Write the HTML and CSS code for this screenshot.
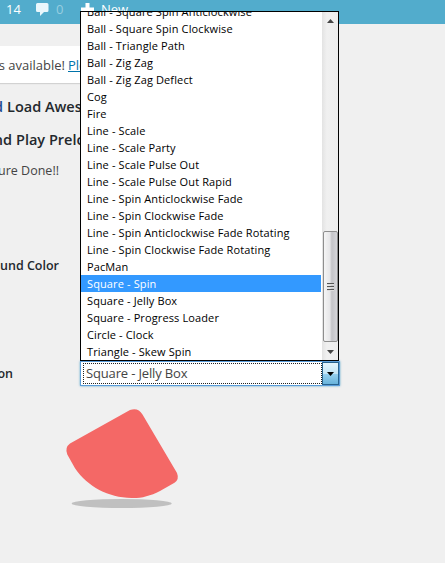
FILE: index.html
```
<!DOCTYPE html>
<html lang="en">
<head>
<meta charset="utf-8">
<title>Preloader settings</title>
<link rel="stylesheet" href="styles.css">
</head>
<body>
<header class="bar">
  <span class="count">14</span>
  <svg class="bubble" width="13" height="13" viewBox="0 0 13 13"><path d="M1.500 0H11Q12.500 0 12.500 1.500V7.500Q12.500 9 11 9H8L4 13V9H1.500Q0 9 0 7.500V1.500Q0 0 1.500 0Z"/></svg>
  <span class="zero">0</span>
  <svg class="plus" width="13" height="13" viewBox="0 0 13 13"><path d="M4.500 0H8.500V4.500H13V8.500H8.500V13H4.500V8.500H0V4.500H4.500Z"/></svg>
  <span class="new">New</span>
</header>
<main>
  <div class="notice"><span class="lead notice-lead">is available!</span><a>Please</a></div>
  <h2 class="line first"><span class="lead w3"><i>d</i></span><span>Load Awesome</span></h2>
  <h2 class="line second"><span class="lead w11">nd</span><span>Play Preloader</span></h2>
  <p class="done"><span class="lead w59">oure Done!!</span></p>
  <div class="label color"><span class="lead w59">und Color</span></div>
  <div class="field">
    <span class="label"><span class="lead w13">on</span></span>
    <div class="select"><div class="value"><span>Square - Jelly Box</span></div><div class="arrow"><svg width="7" height="4" viewBox="0 0 7 4"><path d="M0 0H7L3.500 4Z"/></svg></div></div>
    <div class="popup">
      <ul class="options">
        <li>Ball - Square Spin Anticlockwise</li>
        <li>Ball - Square Spin Clockwise</li>
        <li>Ball - Triangle Path</li>
        <li>Ball - Zig Zag</li>
        <li>Ball - Zig Zag Deflect</li>
        <li>Cog</li>
        <li>Fire</li>
        <li>Line - Scale</li>
        <li>Line - Scale Party</li>
        <li>Line - Scale Pulse Out</li>
        <li>Line - Scale Pulse Out Rapid</li>
        <li>Line - Spin Anticlockwise Fade</li>
        <li>Line - Spin Clockwise Fade</li>
        <li>Line - Spin Anticlockwise Fade Rotating</li>
        <li>Line - Spin Clockwise Fade Rotating</li>
        <li>PacMan</li>
        <li class="active">Square - Spin</li>
        <li>Square - Jelly Box</li>
        <li>Square - Progress Loader</li>
        <li>Circle - Clock</li>
        <li>Triangle - Skew Spin</li>
      </ul>
      <div class="scroll">
        <svg class="up" width="7" height="4" viewBox="0 0 7 4"><path d="M0 4H7L3.500 0Z"/></svg>
        <div class="thumb"><b></b><b></b><b></b></div>
        <svg class="down" width="7" height="4" viewBox="0 0 7 4"><path d="M0 0H7L3.500 4Z"/></svg>
      </div>
    </div>
  </div>
  <svg class="jelly" width="120" height="104" viewBox="62 406 120 104">
    <ellipse cx="121.700" cy="503.500" rx="50" ry="4.500" fill="#c0c0c0"/>
    <path fill="#f46866" d="M70 443.500L130 410Q138 407 142.500 414.500L177 473Q179.500 479.500 174.500 482.800L160 490.900C150 496 141 498.300 131.500 498C108 497.500 88 487 75 468.300L67.300 454.500Q64.500 447.500 70 443.500Z"/>
  </svg>
</main>
</body>
</html>
```
FILE: styles.css
```
* { box-sizing: border-box; }
body { margin: 0; width: 445px; height: 563px; overflow: hidden; background: #f0f0f0; color: #444; font: 13px/18px "Open Sans", sans-serif; }
.bar { height: 24px; background: #52accc; color: #fff; display: flex; align-items: flex-start; padding: 0 0 0 6px; }
.bar svg { fill: #e9f7fc; margin-top: 3px; }
.count { width: 30px; }
.zero { color: #97cee0; margin-left: 7px; width: 17px; }
.bar .plus { margin-left: 8px; fill: #fff; margin-right: 7px; }
.bubble { width: 13px; }
.lead { display: flex; justify-content: flex-end; flex: none; white-space: nowrap; }
.notice { margin-top: 22px; height: 37px; background: #fff; box-shadow: 0 1px 1px rgba(0,0,0,.12); display: flex; align-items: center; width: 338px; }
.notice-lead { width: 65px; margin-right: 3px; }
.notice a { color: #0073aa; text-decoration: underline; }
.line { display: flex; gap: 4px; margin: 0; color: #23282d; font-size: 14.500px; line-height: 20px; font-weight: 600; white-space: nowrap; }
.first { margin-top: 14px; }
.second { margin-top: 13px; }
.line i { font-style: normal; color: #224b92; }
.w3 { width: 3px; }
.w11 { width: 12px; }
.w59 { width: 59px; }
.w13 { width: 13px; }
.done { margin: 12px 0 0; font-size: 12.500px; }
.label { color: #23282d; font-weight: 600; font-size: 12.500px; }
.color { margin-top: 77px; }
.field { position: relative; margin-top: 86px; height: 25px; display: flex; align-items: center; }
.field > .label { width: 80px; }
.select { width: 260px; height: 25px; border: 1px solid #5b9dd9; box-shadow: 0 0 2px rgba(30,140,190,.7); background: #fff; display: flex; padding: 0; }
.value { width: 239px; height: 21px; margin: 1px 0 0 2px; border: 1px dotted #222; padding-left: 2px; line-height: 19px; letter-spacing: -.15px; white-space: nowrap; }
.arrow { width: 17px; height: 23px; border: 1px solid #28628d; background: linear-gradient(#e3f4fc, #c4e5f6 50%, #98d1ef 51%, #68b3db); display: flex; align-items: center; justify-content: center; }
.arrow svg { flex: none; }
.popup { position: absolute; left: 80px; top: -350px; width: 259px; height: 350px; border: 1px solid #000; background: #fff; display: flex; overflow: hidden; }
.options { list-style: none; margin: -9px 0 0; padding: 0; width: 240px; color: #000; font-size: 11px; line-height: 17px; letter-spacing: .12px; white-space: nowrap; }
.options li { height: 17px; padding-left: 6px; }
.options .active { background: #3399ff; color: #fff; }
.scroll { margin-left: 1px; width: 16px; height: 348px; background: linear-gradient(90deg, #e3e3e3, #f0f0f0 30%, #ededed); display: flex; flex-direction: column; align-items: center; }
.scroll svg { fill: #444; flex: none; }
.up { margin-top: 7px; }
.thumb { margin-top: 208px; width: 15px; height: 111px; border: 1px solid #8e8e8e; border-radius: 2px; background: linear-gradient(90deg, #f5f5f5, #e6e6e8 45%, #c4c4c8 60%, #d6d6da); display: flex; flex-direction: column; align-items: center; justify-content: center; gap: 1px; }
.thumb b { width: 7px; height: 2px; background: #555; border-bottom: 1px solid #ddd; }
.down { margin-top: 8px; }
.jelly { display: block; margin: 20px 0 0 62px; }
```
